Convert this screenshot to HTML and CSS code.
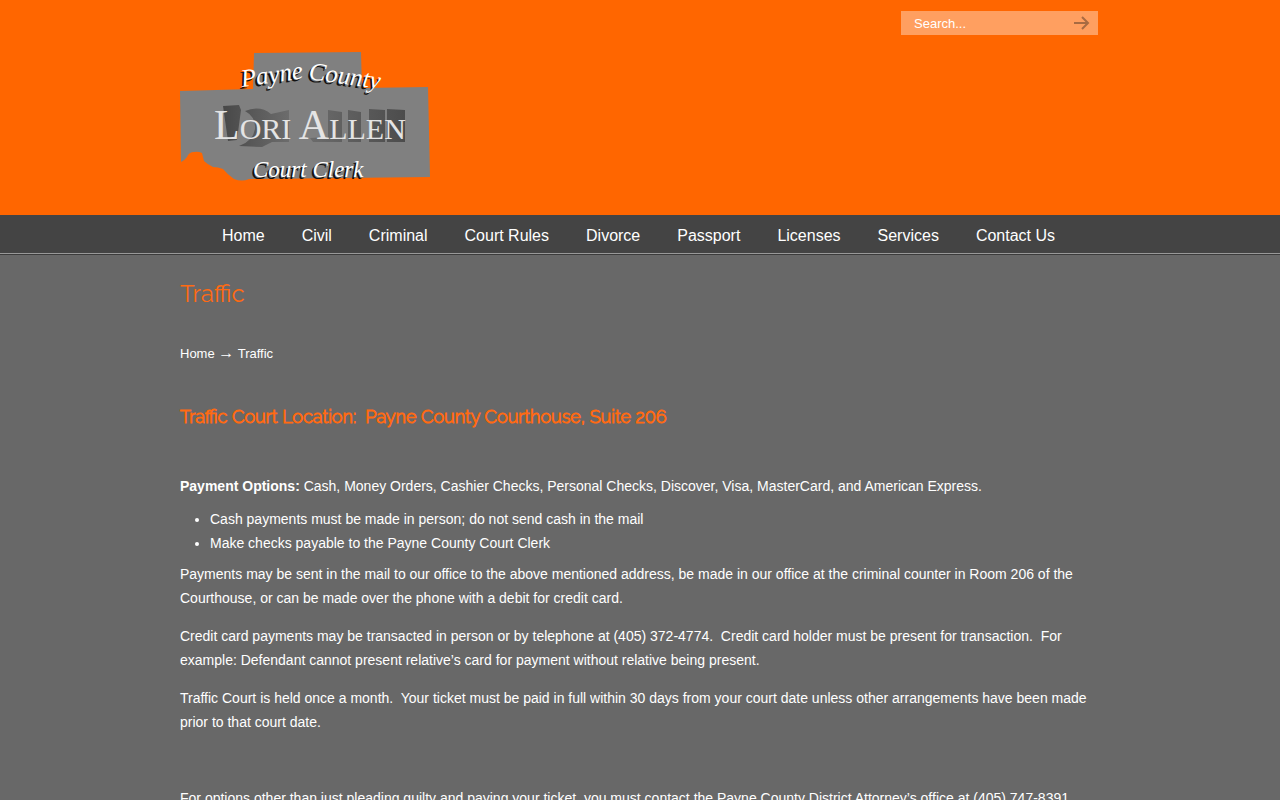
FILE: index.html
```
<!DOCTYPE html>
<html lang="en">
<head>
  <meta charset="UTF-8">
  <meta name="viewport" content="width=device-width, initial-scale=1">
  <title>Traffic</title>
  <link rel="stylesheet" href="styles.css">
</head>
<body>
  <header class="header">
    <div class="container">
      <form class="search" role="search">
        <input class="search-input" type="search" aria-label="Search" placeholder="Search...">
        <button class="search-button" type="submit" aria-label="Submit search">
          <svg width="16" height="14" viewBox="0 0 16 14"><path d="M0 7h14M8 1l6 6-6 6"/></svg>
        </button>
      </form>
      <a class="logo" href="#">
        <svg width="250" height="132" viewBox="0 0 250 132" role="img" aria-label="Payne County Court Clerk Lori Allen">
          <defs>
            <linearGradient id="fade" x1="0" y1="0" x2="1" y2="0">
              <stop offset="0" stop-color="#484848"/>
              <stop offset="0.4" stop-color="#707070"/>
              <stop offset="1" stop-color="#4c4c4c"/>
            </linearGradient>
          </defs>
          <path class="county" d="M74 3 181 2 182 38 248 37 250 127 69 129Q62 132 54 129Q47 124 43 119Q38 117 33 117Q27 114 24 111L22 103Q18 101 14 102Q9 102 7 107Q4 111 1 112L0 41 73 39Z"/>
          <path class="depth" d="M43 56 59 55 61 60 57 90 48 91ZM65 61Q80 55 91 64L109 60V92H92L82 97 59 96Q73 91 75 79Q76 67 65 61ZM130 88 149 87 158 92 133 92ZM148 60 162 62V92H148ZM168 60 181 62V92H168ZM189 59 205 60V92H189ZM207 59 225 60V92H207Z"/>
          <g class="script shade">
            <text x="60" y="39" transform="rotate(-8 60 39)">Payne</text>
            <text x="126" y="31" transform="rotate(8 126 31)">County</text>
            <text class="clerk" x="71" y="129">Court Clerk</text>
          </g>
          <g class="script">
            <text x="62" y="37" transform="rotate(-8 62 37)">Payne</text>
            <text x="128" y="29" transform="rotate(8 128 29)">County</text>
            <text class="clerk" x="73" y="127">Court Clerk</text>
          </g>
          <text class="name" x="34" y="89">L<tspan class="caps">ORI </tspan>A<tspan class="caps">LLEN</tspan></text>
        </svg>
      </a>
    </div>
  </header>

  <nav class="nav">
    <ul class="menu">
      <li><a href="#">Home</a></li>
      <li><a href="#">Civil</a></li>
      <li><a href="#">Criminal</a></li>
      <li><a href="#">Court Rules</a></li>
      <li><a href="#">Divorce</a></li>
      <li><a href="#">Passport</a></li>
      <li><a href="#">Licenses</a></li>
      <li><a href="#">Services</a></li>
      <li><a href="#">Contact Us</a></li>
    </ul>
  </nav>

  <main class="container content">
    <h1>Traffic</h1>
    <div class="breadcrumbs"><a href="#">Home</a> <span class="arrow">→</span> Traffic</div>

    <h2>Traffic Court Location:&nbsp; Payne County Courthouse, Suite 206</h2>

    <p class="payment"><strong>Payment Options:</strong> Cash, Money Orders, Cashier Checks, Personal Checks, Discover, Visa, MasterCard, and American Express.</p>
    <ul class="list">
      <li>Cash payments must be made in person; do not send cash in the mail</li>
      <li>Make checks payable to the Payne County Court Clerk</li>
    </ul>
    <p>Payments may be sent in the mail to our office to the above mentioned address, be made in our office at the criminal counter in Room 206 of the Courthouse, or can be made over the phone with a debit for credit card.</p>
    <p>Credit card payments may be transacted in person or by telephone at (405) 372-4774.&nbsp; Credit card holder must be present for transaction.&nbsp; For example: Defendant cannot present relative’s card for payment without relative being present.</p>
    <p>Traffic Court is held once a month.&nbsp; Your ticket must be paid in full within 30 days from your court date unless other arrangements have been made prior to that court date.</p>
    <p>&nbsp;</p>
    <p>For options other than just pleading guilty and paying your ticket, you must contact the Payne County District Attorney’s office at (405) 747-8391.</p>
  </main>
</body>
</html>
```

FILE: styles.css
```
* {
  box-sizing: border-box;
}

body {
  margin: 0;
  background: #686868;
  color: #fff;
  font-family: "Liberation Sans", Arial, sans-serif;
  font-size: 14px;
  line-height: 24px;
}

a {
  color: inherit;
  text-decoration: none;
}

.container {
  max-width: 920px;
  margin: 0 auto;
}

/* header */
.header {
  background: #ff6600;
  padding: 11px 0 33px;
}

.search {
  display: flex;
  align-items: center;
  width: 197px;
  height: 24px;
  margin: 0 2px 15px auto;
  padding: 0 8px 0 13px;
  background: #ff9f60;
}

.search-input {
  flex: 1;
  min-width: 0;
  padding: 0;
  border: 0;
  outline: 0;
  background: none;
  color: #fff;
  font: 13px "Liberation Sans", Arial, sans-serif;
}

.search-input::placeholder {
  color: #fff;
  opacity: 1;
}

.search-button {
  display: flex;
  padding: 0;
  border: 0;
  background: none;
  cursor: pointer;
}

.search-button path {
  fill: none;
  stroke: #a86b42;
  stroke-width: 2;
}

.logo,
.logo svg {
  display: block;
  width: 250px;
}

.logo svg {
  overflow: visible;
}

.county {
  fill: #808080;
}

.depth {
  fill: url(#fade);
}

.script {
  fill: #fff;
  font-family: "Liberation Serif", serif;
  font-size: 25px;
  font-style: italic;
}

.clerk {
  font-size: 23px;
}

.shade {
  fill: #111;
}

.name {
  fill: #e4e4e4;
  font-family: "Liberation Serif", serif;
  font-size: 42px;
}

.caps {
  font-size: 30px;
}

/* menu */
.nav {
  background: #444;
  border-bottom: 1px solid #3c3c3c;
}

.menu {
  display: flex;
  flex-wrap: wrap;
  justify-content: center;
  gap: 0 37px;
  margin: 0;
  padding: 9px 3px 5px 0;
  border-bottom: 1px solid #999;
  list-style: none;
  font-size: 16px;
}

/* page */
h1,
h2 {
  margin: 0;
  color: #ff6a13;
  font-family: Raleway, Lato, sans-serif;
  font-weight: 400;
}

h1 {
  padding-top: 23px;
  font-size: 24px;
  line-height: 32px;
}

.breadcrumbs {
  margin: 31px 0 39px;
  font-size: 13px;
}

.arrow {
  font-family: "Liberation Serif", serif;
  font-size: 16px;
}

h2 {
  margin-bottom: 45px;
  font-size: 18px;
  font-weight: 300;
  line-height: 24px;
  -webkit-text-stroke: 1px #ff6a13;
}

p {
  margin: 0 0 14px;
}

.payment {
  margin-bottom: 9px;
}

.list {
  margin: 0 0 7px;
  padding-left: 30px;
}
```
